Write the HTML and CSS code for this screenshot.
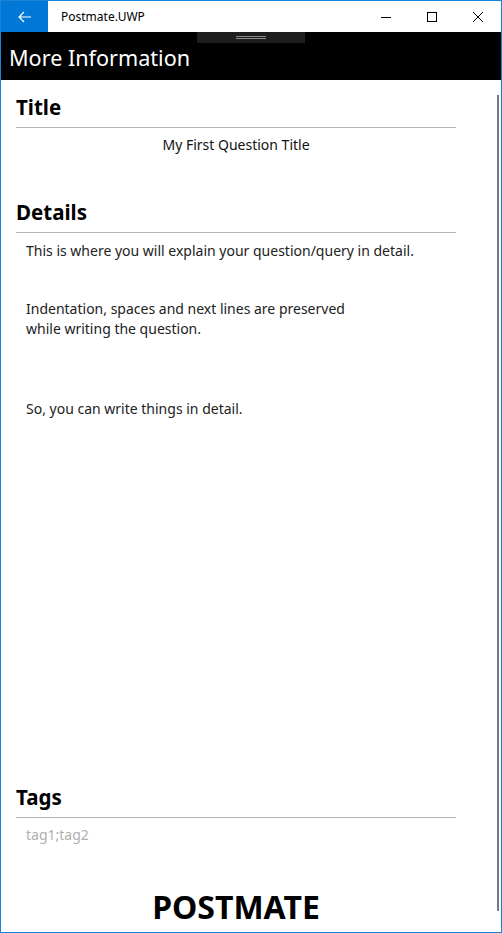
FILE: index.html
```html
<!DOCTYPE html>
<html>
<head>
<meta charset="utf-8">
<link rel="stylesheet" href="styles.css">
</head>
<body>
<div class="window">
  <div class="titlebar">
    <div class="back">
      <svg width="14" height="12" viewBox="0 0 14 12"><path d="M6 1 L1 6 L6 11 M1 6 H13" fill="none" stroke="#fff" stroke-width="1.2"/></svg>
    </div>
    <div class="app-name">Postmate.UWP</div>
    <div class="controls">
      <div class="ctl"><svg width="12" height="12" viewBox="0 0 12 12"><path d="M1 6.5 H11" stroke="#000" stroke-width="1"/></svg></div>
      <div class="ctl"><svg width="12" height="12" viewBox="0 0 12 12"><rect x="1.5" y="1.5" width="9" height="9" fill="none" stroke="#000" stroke-width="1"/></svg></div>
      <div class="ctl"><svg width="12" height="12" viewBox="0 0 12 12"><path d="M1 1 L11 11 M11 1 L1 11" stroke="#000" stroke-width="1"/></svg></div>
    </div>
  </div>
  <div class="header">
    <div class="handle"><span></span><span></span></div>
    <h1 class="page-title">More Information</h1>
  </div>
  <div class="content">
    <div class="scroll">
      <section class="sec">
        <h2 class="sec-title">Title</h2>
        <p class="q-title">My First Question Title</p>
      </section>
      <section class="sec details">
        <h2 class="sec-title">Details</h2>
        <div class="detail-text">
          <p>This is where you will explain your question/query in detail.</p>
          <p class="gap1">Indentation, spaces and next lines are preserved<br>while writing the question.</p>
          <p class="gap2">So, you can write things in detail.</p>
        </div>
      </section>
      <section class="sec tags">
        <h2 class="sec-title">Tags</h2>
        <p class="tag-text">tag1;tag2</p>
      </section>
      <div class="brand">POSTMATE</div>
    </div>
    <div class="scrollbar"></div>
  </div>
</div>
</body>
</html>
```
FILE: styles.css
```css
* { box-sizing: border-box; margin: 0; padding: 0; }
html, body { width: 502px; height: 933px; overflow: hidden; background: #fff; }
body { font-family: "Noto Sans", "Open Sans", sans-serif; color: #000; }
.window {
  width: 502px; height: 933px;
  border: 1px solid #1883d7;
  display: flex; flex-direction: column;
}
.titlebar { height: 31px; display: flex; align-items: center; background: #fff; }
.back { width: 47px; height: 31px; background: #0078d7; display: flex; align-items: center; justify-content: center; }
.app-name { font-size: 12px; padding-left: 13px; flex: 1; color: #000; }
.controls { display: flex; height: 31px; }
.ctl { width: 46px; display: flex; align-items: center; justify-content: center; }
.header { height: 48px; background: #000; position: relative; display: flex; align-items: center; }
.handle {
  position: absolute; left: 196px; top: 0; width: 108px; height: 11px; background: #1f1f1f;
  display: flex; flex-direction: column; align-items: center; justify-content: center; gap: 1px;
}
.handle span { display: block; width: 30px; height: 1px; background: #8a8a8a; }
.page-title { color: #fff; font-weight: 400; font-size: 21.6px; padding-left: 8px; padding-top: 2px; letter-spacing: 0; }
.content { flex: 1; display: flex; position: relative; }
.scroll { width: 440px; margin-left: 15px; display: flex; flex-direction: column; }
.sec-title { font-size: 20.5px; font-weight: 700; line-height: 28px; padding-top: 13px; padding-bottom: 6px; border-bottom: 1px solid #b4b4b4; }
.q-title { font-size: 14px; text-align: center; line-height: 20px; padding-top: 7px; color: #111; }
.details { margin-top: 30px; }
.detail-text { padding-left: 10px; font-size: 14px; line-height: 20px; color: #222; padding-top: 8px; }
.gap1 { margin-top: 38px; }
.gap2 { margin-top: 60px; }
.tags { margin-top: auto; }
.tag-text { padding-left: 10px; font-size: 14px; line-height: 20px; color: #b0b0b0; padding-top: 7px; }
.brand { text-align: center; font-size: 32px; font-weight: 700; margin-top: 43px; margin-bottom: 6px; line-height: 38px; }
.scrollbar { position: absolute; right: 2px; top: 15px; bottom: 21px; width: 2px; background: #7a7a7a; }
```
